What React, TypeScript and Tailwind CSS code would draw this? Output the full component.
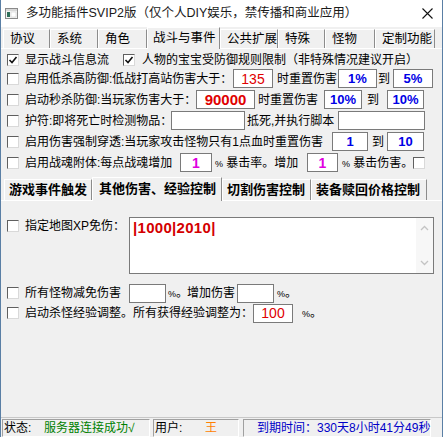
import React from "react";

type BoxProps = {
  w: string;
  children?: React.ReactNode;
  tone?: string;
};

function CheckBox({ checked = false }: { checked?: boolean }) {
  return (
    <div className="w-[12px] h-[12px] shrink-0 bg-white border border-t-[#5f5f5f] border-l-[#5f5f5f] border-r-[#d9d9d9] border-b-[#d9d9d9] flex items-center justify-center">
      {checked && (
        <svg width="10" height="10" viewBox="0 0 10 10">
          <path d="M1.5 5 L4 7.5 L8.5 2" fill="none" stroke="#111" strokeWidth="1.6" />
        </svg>
      )}
    </div>
  );
}

function Field({ w, children, tone = "" }: BoxProps) {
  return (
    <div
      className={`${w} h-[19px] shrink-0 bg-white border border-[#7a7a7a] flex items-center justify-center leading-none ${tone}`}
    >
      {children}
    </div>
  );
}

function Tab({ label, w, active = false }: { label: string; w: string; active?: boolean }) {
  if (active) {
    return (
      <div
        className={`${w} h-[22px] shrink-0 -mb-[1px] relative z-10 bg-[#f0f0f0] border-t border-l border-white border-r border-r-[#8c8c8c] pl-[5px] pt-[1px] text-[12.5px] leading-[18px] text-black`}
      >
        {label}
      </div>
    );
  }
  return (
    <div
      className={`${w} h-[19px] shrink-0 bg-[#f0f0f0] border-t border-l border-white border-r border-r-[#8c8c8c] pl-[6px] pt-[1px] text-[12.5px] leading-[17px] text-black`}
    >
      {label}
    </div>
  );
}

function SubTab({ label, w, active = false }: { label: string; w: string; active?: boolean }) {
  if (active) {
    return (
      <div
        className={`${w} h-[24px] shrink-0 -mb-[1px] relative z-10 bg-[#f0f0f0] border-t border-l border-white border-r border-r-[#8c8c8c] pl-[6px] text-[13px] font-bold leading-[22px]`}
      >
        {label}
      </div>
    );
  }
  return (
    <div
      className={`${w} h-[21px] shrink-0 bg-[#f0f0f0] border-t border-l border-white border-r border-r-[#8c8c8c] pl-[4px] text-[13px] font-bold leading-[20px]`}
    >
      {label}
    </div>
  );
}

export default function App() {
  const blue = "text-[#0000e6] font-bold text-[13px]";
  const pink = "text-[#e000e0] font-bold text-[14px]";

  return (
    <div className="w-[443px] h-[437px] bg-[#f0f0f0] border-l border-r border-[#5a7fa5] flex flex-col overflow-hidden text-[12px] text-black font-['Liberation_Sans','Noto_Sans_CJK_SC',sans-serif]">
      {/* caption */}
      <div className="h-[27px] shrink-0 bg-white flex items-center pl-[4px] pr-[9px]">
        <svg width="13" height="11" viewBox="0 0 13 11" className="shrink-0">
          <rect x="0.5" y="0.5" width="12" height="10" fill="#f4f4f4" stroke="#8a8a8a" />
          <rect x="1" y="1" width="11" height="2" fill="#d8d8d8" />
          <rect x="2" y="4" width="3" height="5" fill="#2f6f5a" />
          <rect x="6" y="4" width="5" height="5" fill="#ffffff" stroke="#c8c8c8" strokeWidth="0.5" />
        </svg>
        <span className="ml-[8px] text-[12.5px] leading-none text-[#1a1a1a]">
          多功能插件SVIP2版（仅个人DIY娱乐，禁传播和商业应用）
        </span>
        <div className="flex-1" />
        <svg width="11" height="11" viewBox="0 0 11 11">
          <path d="M0.5 0.5 L10.5 10.5 M10.5 0.5 L0.5 10.5" stroke="#111" strokeWidth="1.1" />
        </svg>
      </div>

      {/* main tabs */}
      <div className="h-[21px] shrink-0 flex items-end pl-[2px]">
        <Tab label="协议" w="w-[47px]" />
        <Tab label="系统" w="w-[48px]" />
        <Tab label="角色" w="w-[49px]" />
        <Tab label="战斗与事件" w="w-[73px]" active />
        <Tab label="公共扩展" w="w-[58px]" />
        <Tab label="特殊" w="w-[47px]" />
        <Tab label="怪物" w="w-[50px]" />
        <Tab label="定制功能" w="w-[60px]" />
      </div>

      {/* main panel */}
      <div className="h-[369px] shrink-0 border-t border-white flex flex-col pt-[3px]">
        <div className="h-[16px] flex items-center pl-[6px]">
          <CheckBox checked />
          <span className="ml-[6px] w-[98px]">显示战斗信息流</span>
          <CheckBox checked />
          <span className="ml-[7px]">人物的宝宝受防御规则限制（非特殊情况建议开启）</span>
        </div>

        <div className="h-[21px] flex items-center pl-[6px]">
          <CheckBox />
          <span className="ml-[6px] w-[208px] whitespace-nowrap">启用低杀高防御:低战打高站伤害大于：</span>
          <Field w="w-[40px]" tone="text-[#e00000] text-[14px]">135</Field>
          <span className="w-[65px] pl-[4px] whitespace-nowrap">时重置伤害</span>
          <Field w="w-[39px]" tone={blue}>1%</Field>
          <span className="w-[16px] pl-[1px]">到</span>
          <Field w="w-[40px]" tone={blue}>5%</Field>
        </div>

        <div className="h-[21px] flex items-center pl-[6px]">
          <CheckBox />
          <span className="ml-[6px] w-[171px] whitespace-nowrap">启动秒杀防御:当玩家伤害大于：</span>
          <Field w="w-[59px]" tone="text-[#e00000] font-bold text-[15px]">90000</Field>
          <span className="w-[69px] pl-[3px] whitespace-nowrap">时重置伤害</span>
          <Field w="w-[38px]" tone={blue}>10%</Field>
          <span className="w-[25px] pl-[5px]">到</span>
          <Field w="w-[37px]" tone={blue}>10%</Field>
        </div>

        <div className="h-[21px] flex items-center pl-[6px]">
          <CheckBox />
          <span className="ml-[6px] w-[146px] whitespace-nowrap">护符:即将死亡时检测物品：</span>
          <Field w="w-[74px]" />
          <span className="w-[93px] pl-[2px] whitespace-nowrap">抵死,并执行脚本</span>
          <Field w="w-[87px]" />
        </div>

        <div className="h-[21px] flex items-center pl-[6px]">
          <CheckBox />
          <span className="ml-[6px] w-[307px] whitespace-nowrap">启用伤害强制穿透:当玩家攻击怪物只有1点血时重置伤害</span>
          <Field w="w-[36px]" tone={blue}>1</Field>
          <span className="w-[19px] pl-[4px]">到</span>
          <Field w="w-[37px]" tone={blue}>10</Field>
        </div>

        <div className="h-[21px] flex items-center pl-[6px]">
          <CheckBox />
          <span className="ml-[6px] w-[155px] whitespace-nowrap">启用战魂附体:每点战魂增加</span>
          <Field w="w-[32px]" tone={pink}>1</Field>
          <span className="w-[95px] pl-[3px] whitespace-nowrap">
            <span className="text-[9px]">%</span> 暴击率。增加
          </span>
          <Field w="w-[31px]" tone={pink}>1</Field>
          <span className="w-[75px] pl-[4px] whitespace-nowrap">
            <span className="text-[9px]">%</span> 暴击伤害。
          </span>
          <CheckBox />
        </div>

        {/* inner tabs */}
        <div className="h-[24px] mt-[3px] shrink-0 flex items-end pl-[3px]">
          <SubTab label="游戏事件触发" w="w-[88px]" />
          <SubTab label="其他伤害、经验控制" w="w-[130px]" active />
          <SubTab label="切割伤害控制" w="w-[89px]" />
          <SubTab label="装备赎回价格控制" w="w-[116px]" />
        </div>

        <div className="flex-1 border-t border-white flex flex-col pt-[16px]">
          <div className="flex items-start pl-[6px]">
            <div className="h-[18px] flex items-center">
              <CheckBox />
              <span className="ml-[6px] w-[104px] whitespace-nowrap">指定地图XP免伤：</span>
            </div>
            <div className="w-[305px] h-[57px] bg-white border border-[#7a7a7a] flex">
              <div className="flex-1 pl-[3px] pt-[1px] text-[15px] font-bold text-[#d40000] leading-[18px] tracking-[0.3px]">
                |1000|2010|
              </div>
              <div className="w-[17px] flex flex-col items-center justify-between py-[7px] bg-[#f7f7f7]">
                <svg width="9" height="6" viewBox="0 0 9 6">
                  <path d="M1 5 L4.5 1.5 L8 5" fill="none" stroke="#c4c4c4" strokeWidth="1.3" />
                </svg>
                <svg width="9" height="6" viewBox="0 0 9 6">
                  <path d="M1 1 L4.5 4.5 L8 1" fill="none" stroke="#c4c4c4" strokeWidth="1.3" />
                </svg>
              </div>
            </div>
          </div>

          <div className="h-[20px] mt-[9px] flex items-center pl-[6px]">
            <CheckBox />
            <span className="ml-[6px] w-[104px] whitespace-nowrap">所有怪物减免伤害</span>
            <Field w="w-[37px]" />
            <span className="w-[21px] pl-[2px] whitespace-nowrap">
              <span className="text-[9px]">%</span>。
            </span>
            <span className="w-[50px] whitespace-nowrap">增加伤害</span>
            <Field w="w-[37px]" />
            <span className="pl-[3px] whitespace-nowrap">
              <span className="text-[9px]">%</span>。
            </span>
          </div>

          <div className="h-[20px] flex items-center pl-[6px]">
            <CheckBox />
            <span className="ml-[6px] w-[228px] whitespace-nowrap">启动杀怪经验调整。所有获得经验调整为：</span>
            <Field w="w-[40px]" tone="text-[#e00000] text-[14px]">100</Field>
            <span className="pl-[9px] whitespace-nowrap">
              <span className="text-[9px]">%</span>。
            </span>
          </div>
        </div>
      </div>

      {/* status bar */}
      <div className="h-[20px] shrink-0 flex items-stretch pl-[1px] pt-[1px] border-t border-[#c8c8c8]">
        <div className="w-[148px] border border-t-[#a0a0a0] border-l-[#a0a0a0] border-r-white border-b-white flex items-center pl-[1px] whitespace-nowrap">
          <span className="w-[40px]">状态:</span>
          <span className="text-[#008000]">服务器连接成功√</span>
        </div>
        <div className="w-[86px] ml-[3px] border border-t-[#a0a0a0] border-l-[#a0a0a0] border-r-white border-b-white flex items-center pl-[1px] whitespace-nowrap">
          <span className="w-[50px]">用户:</span>
          <span className="text-[#ff8000]">王</span>
        </div>
        <div className="w-[188px] ml-[4px] border border-t-[#a0a0a0] border-l-[#a0a0a0] border-r-white border-b-white flex items-center pl-[13px] whitespace-nowrap text-[#0000c8]">
          到期时间：330天8小时41分49秒
        </div>
      </div>
    </div>
  );
}
